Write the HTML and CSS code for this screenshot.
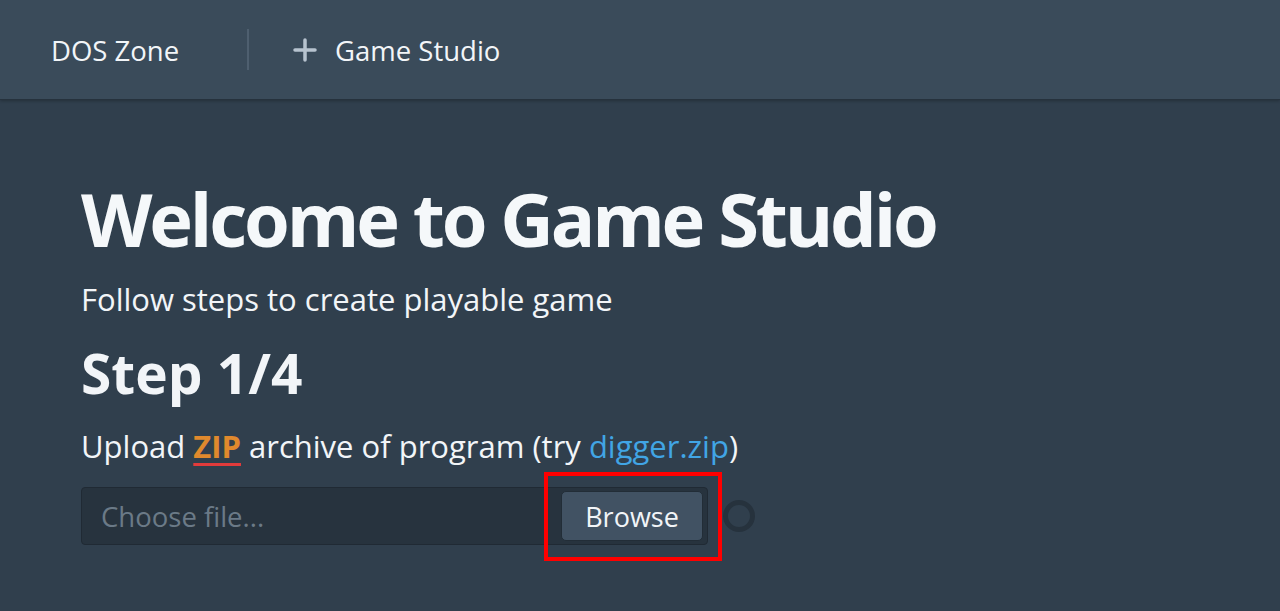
FILE: index.html
```html
<!DOCTYPE html>
<html>
<head>
<meta charset="utf-8">
<link rel="stylesheet" href="styles.css">
</head>
<body>
<header class="nav">
  <a class="brand">DOS Zone</a>
  <span class="sep"></span>
  <a class="nav-item">
    <svg class="plus" width="24" height="24" viewBox="0 0 24 24"><path d="M12 2v20M2 12h20" stroke="#b7c3cf" stroke-width="3.5" stroke-linecap="round" fill="none"/></svg>
    <span>Game Studio</span>
  </a>
</header>
<main class="content">
  <h1 class="title">Welcome to Game Studio</h1>
  <p class="subtitle">Follow steps to create playable game</p>
  <h2 class="step">Step 1/4</h2>
  <p class="upload">Upload <span class="zip">ZIP</span> archive of program (try <a class="link">digger.zip</a>)</p>
  <div class="file-row">
    <div class="file-input">
      <span class="placeholder">Choose file...</span>
      <span class="browse-wrap"><button class="browse">Browse</button></span>
    </div>
    <span class="spinner"></span>
  </div>
</main>
</body>
</html>
```
FILE: styles.css
```css
html, body {
  margin: 0;
  padding: 0;
  height: 100%;
}
body {
  background: #303f4d;
  font-family: "Open Sans", "Noto Sans", sans-serif;
  color: #f2f5f8;
  overflow: hidden;
}
.nav {
  height: 100px;
  padding-top: 2px;
  background: #3a4b5a;
  border-bottom: 1px solid #26323d;
  box-shadow: 0 1px 3px rgba(0,0,0,0.25);
  display: flex;
  align-items: center;
  box-sizing: border-box;
}
.brand {
  font-size: 27.5px;
  color: #f2f5f8;
  padding-left: 51px;
  width: 247px;
  box-sizing: border-box;
}
.sep {
  width: 2px;
  height: 41px;
  margin-top: -2px;
  background: #4e5f6f;
}
.nav-item {
  display: flex;
  align-items: center;
  margin-left: 44px;
  font-size: 27.5px;
  color: #f2f5f8;
}
.plus {
  margin-right: 18px;
  margin-top: -2px;
}
.content {
  padding: 0 0 0 81px;
}
.title {
  margin: 0;
  padding-top: 74px;
  font-size: 74px;
  font-weight: 700;
  line-height: 90px;
  letter-spacing: -3.2px;
  color: #f5f8fa;
}
.subtitle {
  margin: 15px 0 0;
  font-size: 31px;
  line-height: 40px;
}
.step {
  margin: 22px 0 0;
  font-size: 55px;
  font-weight: 700;
  line-height: 64px;
}
.upload {
  margin: 21px 0 0;
  font-size: 31px;
  line-height: 40px;
}
.zip {
  color: #e0892d;
  font-weight: 700;
  text-decoration: underline;
  text-decoration-color: #e23b3b;
  text-decoration-thickness: 3px;
  text-underline-offset: 5px;
}
.link {
  color: #41a5e5;
}
.file-row {
  margin-top: 21px;
  display: flex;
  align-items: center;
}
.file-input {
  width: 627px;
  height: 58px;
  box-sizing: border-box;
  background: #27333e;
  border: 1px solid #202a34;
  border-radius: 4px;
  display: flex;
  align-items: center;
  justify-content: space-between;
  padding: 0 4px 0 19px;
}
.placeholder {
  color: #6b7a87;
  font-size: 27.5px;
}
.browse-wrap {
  position: relative;
  display: flex;
}
.browse-wrap::after {
  content: "";
  position: absolute;
  left: -17px;
  top: -19px;
  width: 178px;
  height: 89px;
  box-sizing: border-box;
  border: 4px solid #ff0000;
}
.browse {
  width: 142px;
  height: 50px;
  background: #415263;
  border: 1px solid #222d37;
  border-radius: 5px;
  color: #f2f5f8;
  font-family: inherit;
  font-size: 27px;
  padding: 0;
}
.spinner {
  width: 32px;
  height: 32px;
  box-sizing: border-box;
  border: 5px solid #26323d;
  border-radius: 50%;
  margin-left: 15px;
}
```
